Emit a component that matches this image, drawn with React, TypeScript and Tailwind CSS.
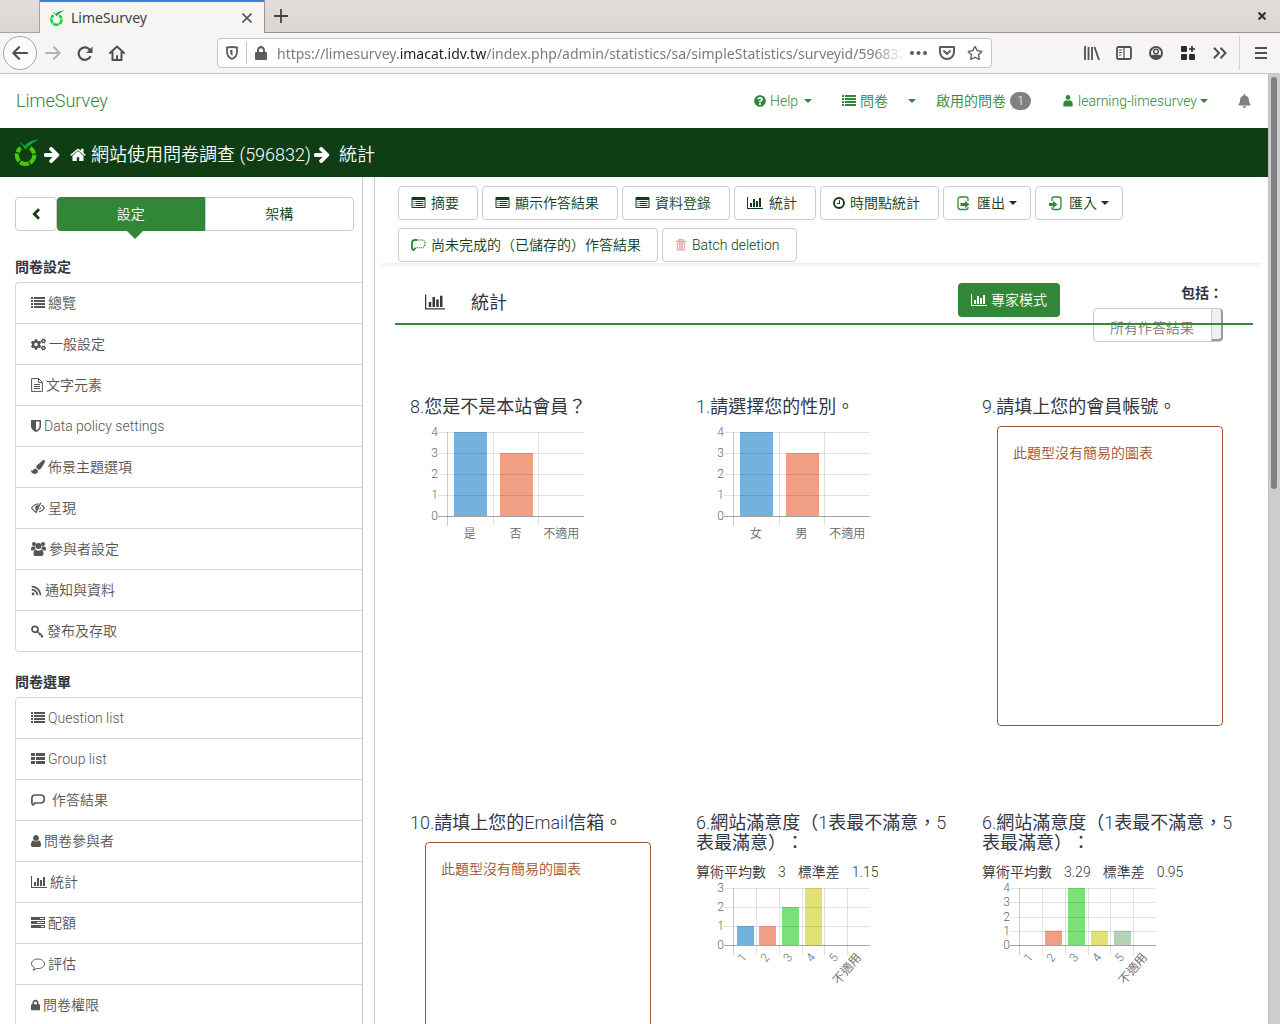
import React from "react";
import { FaBell, FaCogs, FaLock, FaPaintBrush, FaQuestionCircle, FaRegStar, FaRss } from "react-icons/fa";

type IconProps = { className?: string };

/* ---------- icons ---------- */

function BarChart({ className }: IconProps) {
  return (
    <svg viewBox="0 0 2048 1792" className={className} fill="currentColor" aria-hidden="true">
      <path d="M640 896v512h-256v-512h256zm384-512v1024h-256v-1024h256zm1024 1152v128h-2048v-1536h128v1408h1920zm-640-896v768h-256v-768h256zm384-384v1152h-256v-1152h256z" />
    </svg>
  );
}

function HomeIcon({ className }: IconProps) {
  return (
    <svg viewBox="64 128 1664 1472" className={className} fill="currentColor" aria-hidden="true">
      <path d="M1472 992v480q0 26-19 45t-45 19h-384v-384h-256v384h-384q-26 0-45-19t-19-45v-480q0-1 .5-3t.5-3l575-474 575 474q1 2 1 6zm223-69l-62 74q-8 9-21 11h-3q-13 0-21-7l-692-577-692 577q-12 8-24 7-13-2-21-11l-62-74q-8-10-7-23.5t11-21.5l719-599q32-26 76-26t76 26l244 204v-195q0-14 9-23t23-9h192q14 0 23 9t9 23v408l219 182q10 8 11 21.5t-7 23.5z" />
    </svg>
  );
}

function ArrowRight({ className }: IconProps) {
  return (
    <svg viewBox="0 192 1536 1536" className={className} fill="currentColor" aria-hidden="true">
      <path d="M1472 960q0 54-37 91l-651 651q-39 37-91 37-51 0-90-37l-75-75q-38-38-38-91t38-91l293-293h-704q-52 0-84.5-37.5t-32.5-90.5v-128q0-53 32.5-90.5t84.5-37.5h704l-293-294q-38-36-38-90t38-90l75-75q38-38 90-38 53 0 91 38l651 651q37 35 37 90z" />
    </svg>
  );
}

function ChevronLeft({ className }: IconProps) {
  return (
    <svg viewBox="0 0 10 14" className={className} fill="none" stroke="currentColor" strokeWidth="3.2" aria-hidden="true">
      <path d="M8.500 1.500L3 7l5.500 5.500" />
    </svg>
  );
}

function ShieldIcon({ className }: IconProps) {
  return (
    <svg viewBox="256 128 1280 1536" className={className} fill="currentColor" aria-hidden="true">
      <path d="M1344 960v-640h-448v1137q119-63 213-137 235-184 235-360zm192-768v768q0 86-33.500 170.500t-83 150-118 127.500-126.500 103-121 77.500-89.500 49.500-42.500 20q-12 6-26 6t-26-6q-16-7-42.500-20t-89.500-49.500-121-77.500-126.500-103-118-127.500-83-150-33.500-170.500v-768q0-26 19-45t45-19h1152q26 0 45 19t19 45z" />
    </svg>
  );
}

function UserIcon({ className }: IconProps) {
  return (
    <svg viewBox="256 128 1280 1536" className={className} fill="currentColor" aria-hidden="true">
      <path d="M1536 1399q0 109-62.500 187t-150.500 78h-854q-88 0-150.500-78t-62.500-187q0-85 8.500-160.500t31.500-152 58.500-131 94-89 134.500-34.500q131 128 313 128t313-128q76 0 134.500 34.500t94 89 58.500 131 31.500 152 8.500 160.500zm-256-887q0 159-112.500 271.500t-271.500 112.500-271.500-112.500-112.500-271.500 112.500-271.500 271.500-112.500 271.500 112.500 112.500 271.500z" />
    </svg>
  );
}

function UsersIcon({ className }: IconProps) {
  return (
    <svg viewBox="0 0 15 14" className={className} fill="currentColor" aria-hidden="true">
      <circle cx="3" cy="2" r="2" />
      <circle cx="12" cy="2" r="2" />
      <circle cx="7.500" cy="4" r="3" />
      <path d="M0 7.500Q0 4.500 1.200 4.500H4Q4 6.300 5 7.200 3 7.200 2.500 8.500H1Q0 8.500 0 7.500zM15 7.500q0-3-1.200-3H11q0 1.800-1 2.700 2 0 2.500 1.300H14q1 0 1-1z" />
      <path d="M2.500 12q0-4.300 2.300-4.300 2.700 2 5.400 0 2.300 0 2.300 4.300 0 2-1.700 2H4.200q-1.700 0-1.700-2z" />
    </svg>
  );
}

function EyeSlash({ className }: IconProps) {
  return (
    <svg viewBox="0 0 14 12" className={className} fill="none" stroke="currentColor" aria-hidden="true">
      <path d="M5 10Q2.500 9 .6 6 3.200 2 7 2h1M11 3.200Q12.500 4.300 13.400 6 11.500 9.300 7.800 10" strokeWidth="1.200" />
      <path d="M9.800.8L4.600 11.200" strokeWidth="1.300" />
      <path d="M7.800 3Q4.500 2.600 4 5.500q0 2 1.600 2.800zM9.800 4.500q.8 2.500-2 4z" fill="currentColor" stroke="none" />
    </svg>
  );
}

function FileText({ className }: IconProps) {
  return (
    <svg viewBox="0 0 12 14" className={className} fill="none" stroke="currentColor" aria-hidden="true">
      <path d="M.6.6h7l3.800 3.800v9H.6zM7.500.6v4h4M3 6.500h6M3 8.500h6M3 10.500h6" />
    </svg>
  );
}

function CommentOutline({ className }: IconProps) {
  return (
    <svg viewBox="0 0 14 13" className={className} fill="none" stroke="currentColor" aria-hidden="true">
      <path d="M3.400 9.600Q.5 8.200.5 5.800C.5 3 3.400 1 7 1s6.500 2 6.500 4.800-2.900 4.800-6.500 4.800q-.7 0-1.400-.1Q4 12 2 12.200q1.300-1.200 1.400-2.600z" />
    </svg>
  );
}

function ClockIcon({ className }: IconProps) {
  return (
    <svg viewBox="0 0 13 13" className={className} fill="none" stroke="currentColor" aria-hidden="true">
      <circle cx="6.500" cy="6.500" r="5.400" strokeWidth="2" />
      <path d="M7 3.500V7H4.500" strokeWidth="1.100" />
    </svg>
  );
}

function TrashIcon({ className }: IconProps) {
  return (
    <svg viewBox="0 0 11 13" className={className} fill="none" stroke="currentColor" aria-hidden="true">
      <path d="M0 2.500h11M3.500 2V.7h4V2" strokeWidth="1.400" />
      <path d="M1.500 4v8h8V4M4 5v6M5.500 5v6M7 5v6M1 4.300h9" strokeWidth="1.100" />
    </svg>
  );
}

function ListIcon({ className }: IconProps) {
  return (
    <svg viewBox="0 0 14 12" className={className} fill="currentColor" aria-hidden="true">
      <path d="M0 0h2v2H0zM3 0h11v2H3zM0 3h2v2H0zM3 3h11v2H3zM0 6h2v2H0zM3 6h11v2H3zM0 9h2v2H0zM3 9h11v2H3z" />
    </svg>
  );
}

function ThListIcon({ className }: IconProps) {
  return (
    <svg viewBox="0 0 14 12" className={className} fill="currentColor" aria-hidden="true">
      <path d="M0 0h4v3H0zM5 0h9v3H5zM0 4h4v3H0zM5 4h9v3H5zM0 8h4v3H0zM5 8h9v3H5z" />
    </svg>
  );
}

function ListAltIcon({ className }: IconProps) {
  return (
    <svg viewBox="0 0 14 12" className={className} fill="currentColor" aria-hidden="true">
      <path
        fillRule="evenodd"
        d="M1 0h12q1 0 1 1v9q0 1-1 1H1q-1 0-1-1V1q0-1 1-1zM1 3v7h12V3zM2 4h1v1H2zM4 4h8v1H4zM2 6h1v1H2zM4 6h8v1H4zM2 8h1v1H2zM4 8h8v1H4z"
      />
    </svg>
  );
}

function TasksIcon({ className }: IconProps) {
  return (
    <svg viewBox="0 0 14 12" className={className} fill="currentColor" aria-hidden="true">
      <path fillRule="evenodd" d="M0 0h14v3H0zM9 1h4v1H9zM0 4h14v3H0zM6 5h7v1H6zM0 8h14v3H0zM10 9h3v1h-3z" />
    </svg>
  );
}

function KeyIcon({ className }: IconProps) {
  return (
    <svg viewBox="0 0 13 13" className={className} fill="none" stroke="currentColor" aria-hidden="true">
      <circle cx="4" cy="4.300" r="3" strokeWidth="1.800" />
      <path d="M6 6.200l6 5.600M8.200 10.200l1.800-1.800M10.200 12.400l1.900-1.900" strokeWidth="1.500" />
    </svg>
  );
}

function ReplyBubble({ className }: IconProps) {
  return (
    <svg viewBox="0 0 14 12" className={className} fill="none" stroke="currentColor" aria-hidden="true">
      <path
        d="M2 10.800c.9 0 1.300-.6 1.600-1.800h5.900c2.400 0 3.800-1.400 3.800-4S11.900 1 9.500 1H4.300C2 1 .9 2 .9 4v4c0 1.600.3 2.800 1.100 2.800z"
        strokeWidth="1.700"
      />
    </svg>
  );
}

function PartialBubble({ className }: IconProps) {
  return (
    <svg viewBox="0 0 15 13" className={className} fill="none" stroke="currentColor" aria-hidden="true">
      <path d="M6 1H4Q1 1 1 4v4Q1 11 2.500 11L4.500 8.800" strokeWidth="1.800" />
      <path d="M6 1h5q3 0 3 3.500T11 8.800H4.500" strokeWidth="1.100" strokeDasharray="1.500 .7" />
    </svg>
  );
}

function ExportIcon({ className }: IconProps) {
  return (
    <svg viewBox="0 0 13 15" className={className} fill="none" stroke="currentColor" aria-hidden="true">
      <path d="M11 5V3Q11 1 9 1H3.500Q1 1 1 3.500v7Q1 13.500 3.500 13.500H9q2 0 2-2V11" strokeWidth="1.300" />
      <path d="M3.500 7H8V4.800L12.500 8.500 8 12V10H3.500z" fill="currentColor" stroke="none" />
    </svg>
  );
}

function ImportIcon({ className }: IconProps) {
  return (
    <svg viewBox="0 0 13 15" className={className} fill="none" stroke="currentColor" aria-hidden="true">
      <path d="M3 5V3q0-2 2-2h4.500Q12 1 12 3.500v7q0 3-2.500 3H5q-2 0-2-2V11" strokeWidth="1.300" />
      <path d="M0 7h4V4.800L8.500 8.500 4 12V10H0z" fill="currentColor" stroke="none" />
    </svg>
  );
}

function Caret({ className }: IconProps) {
  return (
    <svg viewBox="0 0 8 4" className={`h-1 w-2 shrink-0 ${className ?? ""}`} fill="currentColor" aria-hidden="true">
      <path d="M0 0h8L4 4z" />
    </svg>
  );
}

function UserDot({ className }: IconProps) {
  return (
    <svg viewBox="0 0 10 13" className={className} fill="currentColor" aria-hidden="true">
      <circle cx="5" cy="2.600" r="2.500" />
      <path d="M0 12.500V10q0-4 3-4h4q3 0 3 4v2.500z" />
    </svg>
  );
}

function LimeLogo({ className, ring = "#46c700", leaf = "#12a537" }: IconProps & { ring?: string; leaf?: string }) {
  return (
    <svg viewBox="0 0 24 26" className={className} aria-hidden="true">
      <g fill="none" stroke={ring} strokeWidth="4">
        <path d="M15.500 8.700a8.500 8.500 0 0 1 3.800 5.300" />
        <path d="M19.500 15.200a8.500 8.500 0 0 1-4.200 7.600" />
        <path d="M14.300 23.300a8.500 8.500 0 0 1-8.400-.9" />
        <path d="M5 21.600a8.500 8.500 0 0 1-2-7.700" />
        <path d="M3.400 12.700a8.500 8.500 0 0 1 3-4" />
      </g>
      <path d="M4.500 3.200q3.500.7 5.500 3.200Q15 1.300 24 .3 16 4.500 11 10 9 6 4.500 3.200z" fill={leaf} />
    </svg>
  );
}

/* ---------- browser chrome ---------- */

function BrowserChrome() {
  return (
    <header className="shrink-0 font-['Noto_Sans','Noto_Sans_CJK_TC',sans-serif] text-[#3d4245]">
      <div className="flex h-[33px] items-stretch bg-gradient-to-b from-[#e1dedb] to-[#d9d6d1]">
        <div className="w-10 shrink-0 rounded-tl-lg border-r border-b border-[#a5a3a0]" />
        <div className="flex w-56 shrink-0 items-center border-t-2 border-[#3584e4] bg-[#f6f5f4] pr-3 pl-[9px]">
          <LimeLogo className="h-4 w-4" ring="#14cd3e" />
          <span className="ml-[6px] flex-1 text-sm">LimeSurvey</span>
          <button type="button" aria-label="Close tab">
            <svg viewBox="0 0 10 10" className="h-[10px] w-[10px]" stroke="#555" strokeWidth="1.600" fill="none">
              <path d="M.5.5l9 9M9.500.5l-9 9" />
            </svg>
          </button>
        </div>
        <div className="flex flex-1 items-center justify-between border-b border-l border-[#97948f] pr-[14px] pl-[9px]">
          <button type="button" aria-label="New tab">
            <svg viewBox="0 0 14 14" className="h-[14px] w-[14px]" stroke="#444" strokeWidth="1.800">
              <path d="M7 0v14M0 7h14" />
            </svg>
          </button>
          <button type="button" aria-label="Close window">
            <svg viewBox="0 0 8 8" className="h-2 w-2" stroke="#2e3436" strokeWidth="2.200">
              <path d="M.5.5l7 7M7.500.5l-7 7" />
            </svg>
          </button>
        </div>
      </div>

      <div className="flex h-[41px] items-center border-b border-[#c6c3c0] bg-[#f6f5f4] pl-[3px] text-[#4a5054]">
        <button type="button" aria-label="Back" className="flex h-[34px] w-[34px] shrink-0 items-center justify-center rounded-full border border-[#a9a7a4] bg-[#fcfcfc]">
          <svg viewBox="0 0 16 14" className="h-[14px] w-4" fill="none" stroke="currentColor" strokeWidth="2.200" strokeLinecap="round" strokeLinejoin="round">
            <path d="M15 7H1.500M7 1.200L1.300 7 7 12.800" />
          </svg>
        </button>
        <button type="button" aria-label="Forward" className="ml-2 text-[#b4b3b1]">
          <svg viewBox="0 0 16 14" className="h-[14px] w-4" fill="none" stroke="currentColor" strokeWidth="2" strokeLinecap="round" strokeLinejoin="round">
            <path d="M1 7h13.500M9 1.200L14.700 7 9 12.800" />
          </svg>
        </button>
        <button type="button" aria-label="Reload" className="ml-4">
          <svg viewBox="0 0 16 15" className="h-[15px] w-4" fill="none" stroke="currentColor" strokeWidth="2.200">
            <path d="M13.500 10.200A6.200 6.200 0 1 1 12 3l1.500 1.700" />
            <path d="M15.500.5V7H9z" fill="currentColor" stroke="none" />
          </svg>
        </button>
        <button type="button" aria-label="Home" className="ml-4">
          <svg viewBox="0 0 16 16" className="h-4 w-4" fill="none" stroke="currentColor" strokeWidth="2" strokeLinecap="round" strokeLinejoin="round">
            <path d="M1 8l7-6.500L15 8M3.500 7.500V15h9V7.500M8 15v-4" />
          </svg>
        </button>

        <div className="ml-[92px] flex h-[30px] w-[775px] min-w-0 items-center rounded border border-[#c9c6c2] bg-white px-2 text-[#5c5c5c]">
          <svg viewBox="0 0 12 14" className="h-[14px] w-3 shrink-0" fill="none" stroke="currentColor" strokeWidth="1.800">
            <path d="M1 1.500Q6 .5 11 1.500v4Q11 11 6 13 1 11 1 5.500z" />
            <path d="M6.500 4v6Q4 8.500 4 4z" fill="currentColor" stroke="none" />
          </svg>
          <div className="ml-2 h-[22px] w-px shrink-0 bg-[#c9c6c2]" />
          <svg viewBox="0 0 12 14" className="ml-2 h-[14px] w-3 shrink-0" fill="currentColor">
            <path fillRule="evenodd" d="M2 6V4.500a4 4.500 0 0 1 8 0V6h1q1 0 1 1v6q0 1-1 1H1q-1 0-1-1V7q0-1 1-1zM4 6h4V4.500a2 2.300 0 0 0-4 0z" />
          </svg>
          <div className="ml-[10px] w-[630px] overflow-hidden pt-px text-sm whitespace-nowrap text-[#7b7b7b] [mask-image:linear-gradient(to_right,black_95%,transparent)]">
            https://limesurvey.<span className="text-[#1f1f1f]">imacat.idv.tw</span>/index.php/admin/statistics/sa/simpleStatistics/surveyid/596832
          </div>
          <svg viewBox="0 0 17 4" className="ml-[5px] h-1 w-[17px] shrink-0" fill="currentColor">
            <circle cx="2" cy="2" r="2" />
            <circle cx="8.500" cy="2" r="2" />
            <circle cx="15" cy="2" r="2" />
          </svg>
          <svg viewBox="0 0 16 14" className="ml-3 h-[14px] w-4 shrink-0" fill="none" stroke="currentColor" strokeWidth="2" strokeLinecap="round" strokeLinejoin="round">
            <path d="M1 1h14v5a7 7 0 0 1-14 0zM5 5l3 3 3-3" />
          </svg>
          <FaRegStar className="ml-3 h-4 w-4 shrink-0" />
        </div>

        <div className="ml-auto flex items-center">
          <svg viewBox="0 0 16 14" className="h-[14px] w-4" fill="none" stroke="currentColor" strokeWidth="1.800">
            <path d="M1 0v14M4.500 1v13M8 1v13M10.500 1l4.500 13" />
          </svg>
          <svg viewBox="0 0 16 14" className="ml-4 h-[14px] w-4" fill="none" stroke="currentColor">
            <rect x="1" y="1" width="14" height="12" rx="1.500" strokeWidth="1.800" />
            <path d="M8 1v12M3 4h3M3 6.500h3M3 9h2" strokeWidth="1.200" />
          </svg>
          <svg viewBox="0 0 14 14" className="ml-[17px] h-[14px] w-[14px]" fill="none" stroke="currentColor">
            <circle cx="7" cy="7" r="6" strokeWidth="2" />
            <circle cx="7" cy="5.500" r="2.300" strokeWidth="1.400" />
            <path d="M2.500 9q4.500-1 9 0v2L7 13l-4.500-2z" fill="currentColor" stroke="none" />
          </svg>
          <svg viewBox="0 0 14 14" className="ml-[18px] h-[14px] w-[14px]" fill="#2b2b2b">
            <rect width="6" height="6" rx="1" />
            <rect y="8" width="6" height="6" rx="1" />
            <rect x="8" y="8" width="6" height="6" rx="1" />
            <path d="M10.200 0h1.600v2.200H14v1.600h-2.200V6h-1.600V3.800H8V2.200h2.200z" />
          </svg>
          <svg viewBox="0 0 14 12" className="ml-[18px] h-3 w-[14px]" fill="none" stroke="currentColor" strokeWidth="2">
            <path d="M1 .7L6 6l-5 5.300M7.500.7l5 5.300-5 5.300" />
          </svg>
          <div className="ml-3 h-[34px] w-px bg-[#d5d3d0]" />
          <svg viewBox="0 0 12 12" className="mr-[13px] ml-[15px] h-3 w-3" fill="none" stroke="currentColor" strokeWidth="2">
            <path d="M0 1h12M0 6h12M0 11h12" />
          </svg>
        </div>
      </div>
    </header>
  );
}

/* ---------- application header ---------- */

function Navbar() {
  return (
    <nav className="flex h-[54px] items-center pr-[17px] pl-4 text-sm text-[#328637]">
      <a href="#home" className="text-lg">LimeSurvey</a>
      <div className="ml-auto flex items-center">
        <a href="#help" className="flex items-center">
          <FaQuestionCircle className="mr-1 h-3 w-3" />
          Help
          <Caret className="ml-[6px]" />
        </a>
        <a href="#surveys" className="ml-[30px] flex items-center">
          <ListIcon className="mr-1 h-3 w-[14px]" />
          問卷
        </a>
        <button type="button" aria-label="Survey menu" className="ml-5">
          <Caret />
        </button>
        <a href="#active" className="ml-5 flex items-center">
          啟用的問卷
          <span className="ml-1 flex h-[18px] w-[21px] items-center justify-center rounded-full bg-[#808080] text-xs text-white">1</span>
        </a>
        <a href="#account" className="ml-8 flex items-center">
          <UserDot className="mr-[5px] h-3 w-[10px]" />
          learning-limesurvey
          <Caret className="ml-[3px]" />
        </a>
        <button type="button" aria-label="Notifications" className="ml-[30px] text-[#808080]">
          <FaBell className="h-[14px] w-[13px]" />
        </button>
      </div>
    </nav>
  );
}

function Breadcrumb() {
  return (
    <div className="flex h-[49px] items-center bg-[#0f3d14] pt-1 pl-[14px] text-lg text-white">
      <LimeLogo className="-mt-[5px] h-[27px] w-[25px]" />
      <ArrowRight className="ml-[5px] h-4 w-4" />
      <HomeIcon className="ml-[10px] h-[15px] w-4" />
      <a href="#survey" className="ml-[5px]">網站使用問卷調查 (596832)</a>
      <ArrowRight className="ml-[3px] h-4 w-4" />
      <span className="ml-[9px]">統計</span>
    </div>
  );
}

/* ---------- sidebar ---------- */

type MenuItem = { icon: React.ReactNode; label: string };

const settingsMenu: MenuItem[] = [
  { icon: <ListIcon className="h-3 w-[14px]" />, label: "總覽" },
  { icon: <FaCogs className="h-[15px] w-[15px]" />, label: "一般設定" },
  { icon: <FileText className="h-[14px] w-3" />, label: "文字元素" },
  { icon: <ShieldIcon className="h-3 w-[10px]" />, label: "Data policy settings" },
  { icon: <FaPaintBrush className="h-[14px] w-[14px]" />, label: "佈景主題選項" },
  { icon: <EyeSlash className="h-3 w-[14px]" />, label: "呈現" },
  { icon: <UsersIcon className="h-[14px] w-[15px]" />, label: "參與者設定" },
  { icon: <FaRss className="h-[11px] w-[11px]" />, label: "通知與資料" },
  { icon: <KeyIcon className="h-[13px] w-[13px]" />, label: "發布及存取" },
];

const surveyMenu: MenuItem[] = [
  { icon: <ListIcon className="h-3 w-[14px]" />, label: "Question list" },
  { icon: <ThListIcon className="h-3 w-[14px]" />, label: "Group list" },
  { icon: <ReplyBubble className="mr-1 h-3 w-[14px]" />, label: "作答結果" },
  { icon: <UserIcon className="h-3 w-[10px]" />, label: "問卷參與者" },
  { icon: <BarChart className="h-[14px] w-4" />, label: "統計" },
  { icon: <TasksIcon className="h-3 w-[14px]" />, label: "配額" },
  { icon: <CommentOutline className="h-[13px] w-[14px]" />, label: "評估" },
  { icon: <FaLock className="h-3 w-[9px]" />, label: "問卷權限" },
];

function MenuGroup({ title, items }: { title: string; items: MenuItem[] }) {
  return (
    <section className="mt-5 pl-[15px]">
      <h2 className="mb-[5px] text-sm leading-5 font-bold text-[#333641]">{title}</h2>
      <ul className="rounded-l border border-r-0 border-[#d6d6d6] text-sm text-[#555]">
        {items.map((item) => (
          <li key={item.label} className="border-b border-[#d6d6d6] last:border-b-0">
            <a href="#menu" className="flex h-10 items-center gap-[3px] pl-[15px]">
              {item.icon}
              <span>{item.label}</span>
            </a>
          </li>
        ))}
      </ul>
    </section>
  );
}

function Sidebar() {
  return (
    <aside className="flex w-[375px] shrink-0 border-r border-[#c8c8c8]">
      <div className="flex-1 overflow-hidden border-r border-[#c8c8c8]">
        <div className="mt-5 mr-2 mb-[26px] ml-[15px] flex h-[34px] text-sm text-[#0f3d14]">
          <button type="button" aria-label="Collapse" className="flex w-[42px] items-center justify-center rounded border border-[#ccc]">
            <ChevronLeft className="h-3 w-[10px]" />
          </button>
          <button type="button" className="relative flex-1 rounded-l bg-[#328637] text-white">
            設定
            <svg viewBox="0 0 16 8" className="absolute top-full left-[70px] h-2 w-4" fill="#328637" aria-hidden="true">
              <path d="M0 0h16L8 8z" />
            </svg>
          </button>
          <button type="button" className="flex-1 rounded-r border border-[#ccc]">架構</button>
        </div>
        <MenuGroup title="問卷設定" items={settingsMenu} />
        <MenuGroup title="問卷選單" items={surveyMenu} />
      </div>
      <div className="w-[11px] shrink-0" />
    </aside>
  );
}

/* ---------- toolbar ---------- */

const toolButtonPadding = {
  wide: "pl-3 pr-[18px]",
  even: "pl-3 pr-4",
  menu: "px-[13px]",
};

function ToolButton({
  icon,
  children,
  kind = "wide",
}: {
  icon: React.ReactNode;
  children: React.ReactNode;
  kind?: keyof typeof toolButtonPadding;
}) {
  return (
    <button
      type="button"
      className={`flex h-[34px] items-center rounded border border-[#ccc] text-sm text-[#0f3d14] ${toolButtonPadding[kind]}`}
    >
      {icon}
      <span className="ml-[5px]">{children}</span>
      {kind === "menu" && <Caret className="ml-1" />}
    </button>
  );
}

function Toolbar() {
  return (
    <div className="mr-[6px] ml-[5px] flex flex-wrap gap-x-1 gap-y-2 pt-[9px] pb-px pl-[18px] shadow-[0_4px_4px_-2px_#ececec]">
      <ToolButton icon={<ListAltIcon className="h-3 w-[15px]" />}>摘要</ToolButton>
      <ToolButton icon={<ListAltIcon className="h-3 w-[15px]" />}>顯示作答結果</ToolButton>
      <ToolButton icon={<ListAltIcon className="h-3 w-[15px]" />}>資料登錄</ToolButton>
      <ToolButton icon={<BarChart className="mr-px h-[14px] w-4" />}>統計</ToolButton>
      <ToolButton icon={<ClockIcon className="h-3 w-3" />}>時間點統計</ToolButton>
      <ToolButton kind="menu" icon={<ExportIcon className="mr-[2px] h-[15px] w-[13px] text-[#328637]" />}>匯出</ToolButton>
      <ToolButton kind="menu" icon={<ImportIcon className="mr-[2px] h-[15px] w-[13px] text-[#328637]" />}>匯入</ToolButton>
      <ToolButton kind="even" icon={<PartialBubble className="h-[13px] w-[15px] text-[#328637]" />}>尚未完成的（已儲存的）作答結果</ToolButton>
      <ToolButton kind="even" icon={<TrashIcon className="h-3 w-3 text-[#e5a0a0]" />}>Batch deletion</ToolButton>
    </div>
  );
}

/* ---------- charts ---------- */

type Bar = { label: string; value: number; color: string };

const BLUE = "#72b2dd";
const ORANGE = "#f09f84";
const GREEN = "#7ae07a";
const YELLOW = "#e2e274";
const SAGE = "#b6d2b6";

function BarPlot({ bars, max, height, rotated }: { bars: Bar[]; max: number; height: number; rotated?: boolean }) {
  const left = 37;
  const right = 174;
  const top = 6;
  const base = top + height;
  const step = (right - left) / bars.length;
  const barWidth = rotated ? 17 : 33;
  const ticks = Array.from({ length: max + 1 }, (_, i) => i);
  const y = (v: number) => base - (v * height) / max;
  return (
    <svg width="180" height={base + 44} className="block overflow-visible" role="img" aria-label="Bar chart">
      {bars.map((bar, i) => (
        <rect
          key={bar.label}
          x={Math.round(left + step * i + (step - barWidth) / 2 + 0.6)}
          y={y(bar.value)}
          width={barWidth}
          height={base - y(bar.value)}
          fill={bar.color}
        />
      ))}
      {ticks.map((t) => (
        <g key={t}>
          <line x1="28" x2={right} y1={Math.round(y(t)) + 0.5} y2={Math.round(y(t)) + 0.5} stroke={t === 0 ? "#a5a5a5" : "rgba(0,0,0,0.11)"} />
          <text x="28" y={y(t) + 4} textAnchor="end" fontSize="12" fill="#666">{t}</text>
        </g>
      ))}
      {bars.map((bar, i) => {
        const x = Math.round(left + step * i) + 0.5;
        const cx = left + step * (i + 0.5);
        return (
          <g key={bar.label}>
            <line x1={x} x2={x} y1={top} y2={base + 10} stroke={i === 0 ? "rgba(0,0,0,0.2)" : "rgba(0,0,0,0.11)"} />
            {rotated ? (
              <text x={cx} y={base + 14} textAnchor="end" fontSize="12" fill="#666" transform={`rotate(-50 ${cx} ${base + 10})`}>{bar.label}</text>
            ) : (
              <text x={cx} y={base + 22} textAnchor="middle" fontSize="12" fill="#666">{bar.label}</text>
            )}
          </g>
        );
      })}
    </svg>
  );
}

function Question({ title, children }: { title: string; children: React.ReactNode }) {
  return (
    <article className="h-[416px] px-[15px] pt-[11px]">
      <h3 className="-mr-3 mb-[9px] font-['Roboto_Light','Roboto','Noto_Sans_CJK_TC',sans-serif] text-lg leading-5 font-normal text-[#333641]">{title}</h3>
      {children}
    </article>
  );
}

function NoChart() {
  return (
    <div className="mx-[15px] h-[300px] rounded border border-[#a0522d] px-[15px] py-[14px] text-sm leading-6 text-[#a0522d]">
      此題型沒有簡易的圖表
    </div>
  );
}

function Stats({ mean, deviation }: { mean: string; deviation: string }) {
  return (
    <dl className="flex text-sm leading-5 text-[#333641]">
      <dt>算術平均數</dt>
      <dd className="ml-3">{mean}</dd>
      <dt className="ml-3">標準差</dt>
      <dd className="ml-3">{deviation}</dd>
    </dl>
  );
}

const satisfaction = "6.網站滿意度（1表最不滿意，5表最滿意）：";

function Content() {
  return (
    <main className="min-w-0 flex-1 overflow-hidden">
      <Toolbar />
      <div className="mr-[15px] ml-5">
        <div className="relative flex h-[62px] items-start pt-5 pr-[30px] pl-[30px] text-[#333641]">
          <BarChart className="mt-[10px] h-[18px] w-5" />
          <h1 className="mt-[6px] ml-[26px] text-lg leading-7 font-normal">統計</h1>
          <button type="button" className="ml-auto flex h-[34px] items-center rounded bg-[#328637] px-[13px] text-sm text-white">
            <BarChart className="mr-1 h-[14px] w-4" />
            專家模式
          </button>
          <div className="ml-[33px] flex w-[130px] shrink-0 flex-col items-end text-sm">
            <label htmlFor="include" className="mb-[5px] leading-5 font-bold">包括：</label>
            <div className="relative flex w-full">
              <select id="include" className="h-[34px] w-full appearance-none rounded border border-[#ccc] bg-white pt-[5px] pl-4 text-[#777]">
                <option>所有作答結果</option>
              </select>
              <span className="pointer-events-none absolute inset-y-px right-0 flex w-3 items-center justify-center rounded-r border-r-2 border-b-2 border-l border-[#999] border-l-[#ccc] bg-[#f0f0f0]">
                <span className="h-[2px] w-[2px] bg-[#222]" />
              </span>
            </div>
          </div>
          <hr className="absolute inset-x-0 bottom-0 border-t-2 border-[#328637]" />
        </div>

        <div className="grid grid-cols-3 pt-[61px]">
          <Question title="8.您是不是本站會員？">
            <BarPlot
              max={4}
              height={84}
              bars={[
                { label: "是", value: 4, color: BLUE },
                { label: "否", value: 3, color: ORANGE },
                { label: "不適用", value: 0, color: GREEN },
              ]}
            />
          </Question>
          <Question title="1.請選擇您的性別。">
            <BarPlot
              max={4}
              height={84}
              bars={[
                { label: "女", value: 4, color: BLUE },
                { label: "男", value: 3, color: ORANGE },
                { label: "不適用", value: 0, color: GREEN },
              ]}
            />
          </Question>
          <Question title="9.請填上您的會員帳號。">
            <NoChart />
          </Question>
          <Question title="10.請填上您的Email信箱。">
            <NoChart />
          </Question>
          <Question title={satisfaction}>
            <Stats mean="3" deviation="1.15" />
            <BarPlot
              rotated
              max={3}
              height={57}
              bars={[
                { label: "1", value: 1, color: BLUE },
                { label: "2", value: 1, color: ORANGE },
                { label: "3", value: 2, color: GREEN },
                { label: "4", value: 3, color: YELLOW },
                { label: "5", value: 0, color: SAGE },
                { label: "不適用", value: 0, color: BLUE },
              ]}
            />
          </Question>
          <Question title={satisfaction}>
            <Stats mean="3.29" deviation="0.95" />
            <BarPlot
              rotated
              max={4}
              height={57}
              bars={[
                { label: "1", value: 0, color: BLUE },
                { label: "2", value: 1, color: ORANGE },
                { label: "3", value: 4, color: GREEN },
                { label: "4", value: 1, color: YELLOW },
                { label: "5", value: 1, color: SAGE },
                { label: "不適用", value: 0, color: BLUE },
              ]}
            />
          </Question>
        </div>
      </div>
    </main>
  );
}

export default function App() {
  return (
    <div lang="zh-Hant" className="flex h-screen flex-col overflow-hidden bg-white [text-spacing-trim:space-all]">
      <BrowserChrome />
      <div className="flex min-h-0 flex-1 font-['Roboto','Noto_Sans_CJK_TC',sans-serif] font-[350]">
        <div className="flex min-w-0 flex-1 flex-col overflow-hidden">
          <Navbar />
          <Breadcrumb />
          <div className="flex min-h-0 flex-1">
            <Sidebar />
            <Content />
          </div>
        </div>
        <div className="w-3 shrink-0 border-l border-[#c0c0bd] bg-[#cdcdcd] pt-[3px]">
          <div className="ml-[2px] h-[412px] w-[6px] rounded-full bg-[#7e8180]" />
        </div>
      </div>
    </div>
  );
}
